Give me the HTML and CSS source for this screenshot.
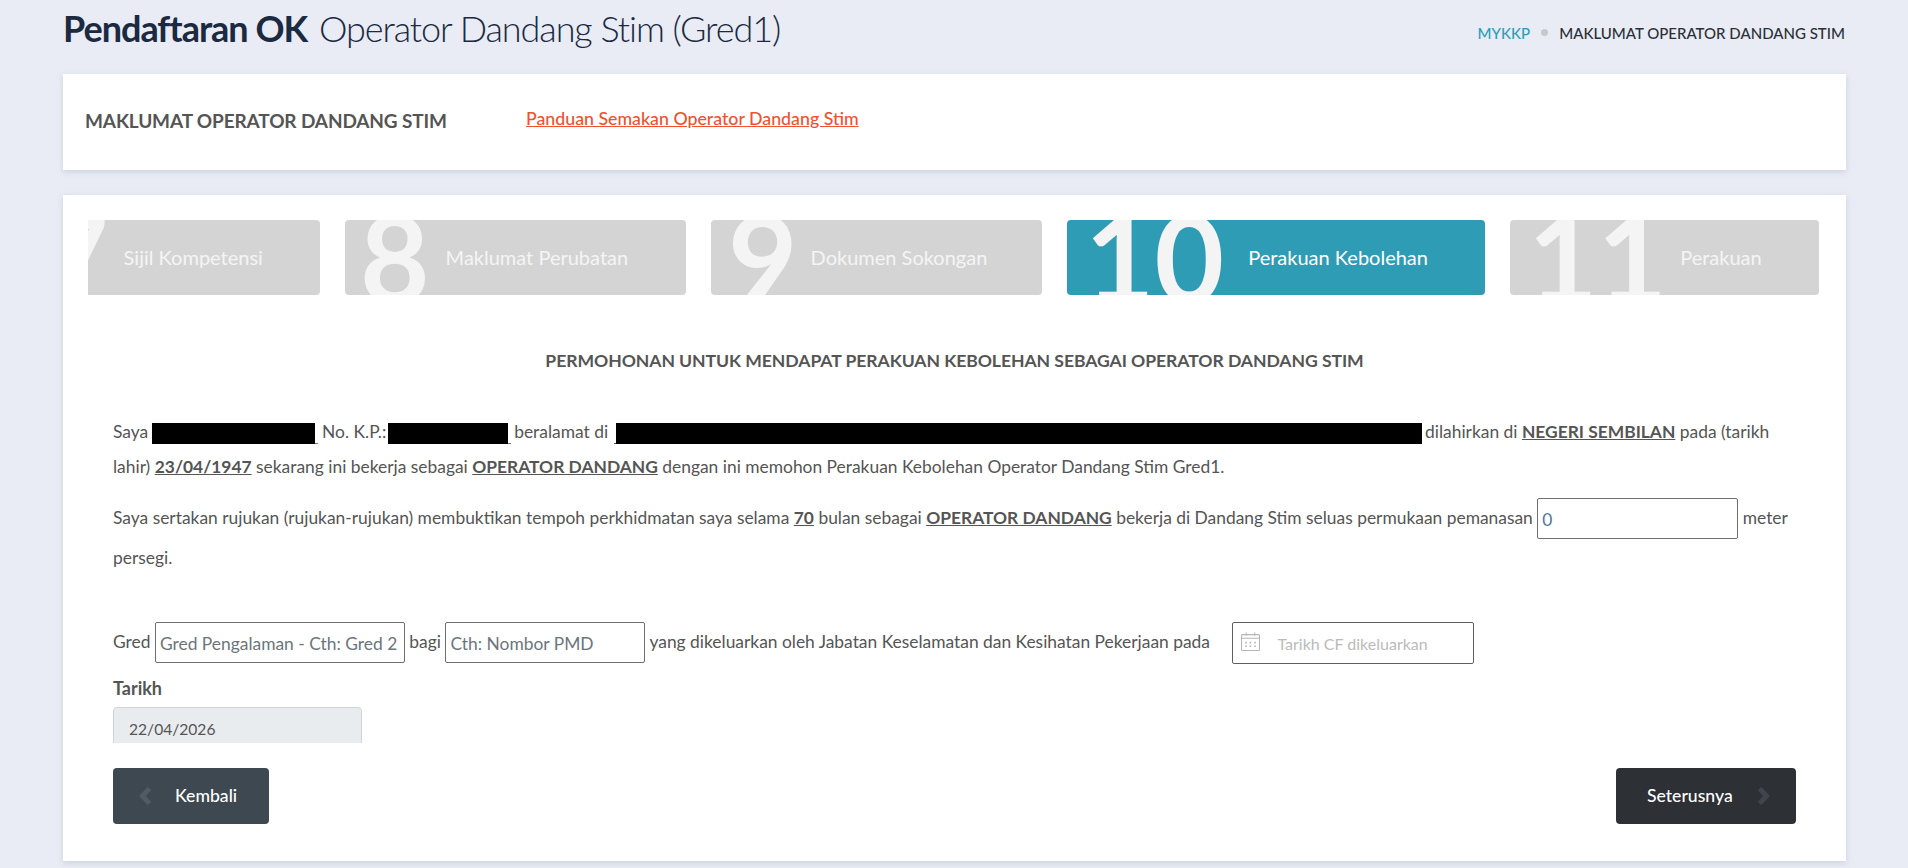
FILE: index.html
```html
<!DOCTYPE html>
<html lang="ms">
<head>
<meta charset="utf-8">
<title>Pendaftaran OK</title>
<link rel="stylesheet" href="styles.css">
</head>
<body>
<header class="page-head">
  <h1 class="page-title"><strong>Pendaftaran OK</strong> Operator Dandang Stim (Gred1)</h1>
  <nav class="crumbs"><a class="crumb-link">MYKKP</a><span class="crumb-dot"></span><span>MAKLUMAT OPERATOR DANDANG STIM</span></nav>
</header>
<section class="card card-info">
  <h2 class="info-title">MAKLUMAT OPERATOR DANDANG STIM</h2>
  <a class="info-link">Panduan Semakan Operator Dandang Stim</a>
</section>
<section class="card card-main">
  <div class="steps">
    <div class="step step-first"><span class="step-num">7</span><span class="step-label">Sijil Kompetensi</span></div>
    <div class="step step-second"><span class="step-num">8</span><span class="step-label">Maklumat Perubatan</span></div>
    <div class="step step-third"><span class="step-num">9</span><span class="step-label">Dokumen Sokongan</span></div>
    <div class="step step-active"><span class="step-num">10</span><span class="step-label">Perakuan Kebolehan</span></div>
    <div class="step step-last"><span class="step-num">11</span><span class="step-label">Perakuan</span></div>
  </div>
  <div class="form-pane">
    <h3 class="form-title">PERMOHONAN UNTUK MENDAPAT PERAKUAN KEBOLEHAN SEBAGAI OPERATOR DANDANG STIM</h3>
    <p class="para">Saya <span class="redact redact-name"></span> No. K.P.: <span class="redact redact-ic"></span> beralamat di <span class="redact redact-addr"></span> dilahirkan di <u class="val">NEGERI SEMBILAN</u> pada (tarikh lahir) <u class="val">23/04/1947</u> sekarang ini bekerja sebagai <u class="val">OPERATOR DANDANG</u> dengan ini memohon Perakuan Kebolehan Operator Dandang Stim Gred1.</p>
    <p class="para para-2">Saya sertakan rujukan (rujukan-rujukan) membuktikan tempoh perkhidmatan saya selama <u class="val">70</u> bulan sebagai <u class="val">OPERATOR DANDANG</u> bekerja di Dandang Stim seluas permukaan pemanasan <input class="field field-area" value="0"> meter persegi.</p>
    <p class="para para-3">Gred <input class="field field-gred" placeholder="Gred Pengalaman - Cth: Gred 2"> bagi <input class="field field-pmd" placeholder="Cth: Nombor PMD"> yang dikeluarkan oleh Jabatan Keselamatan dan Kesihatan Pekerjaan pada
      <span class="date-field">
        <svg class="cal-icon" viewBox="0 0 18 18" width="19" height="19" fill="none" stroke="#b5b5b5" stroke-width="1"><rect x=".5" y="2.5" width="17" height="15" rx="1"/><path d="M.5 6h17M5 .5v3M13 .5v3"/><path d="M4 10h1.5M8.2 10h1.5M12.5 10H14M4 13.5h1.5M8.2 13.5h1.5M12.5 13.5H14" stroke-width="1.6"/></svg>
        <span class="date-ph">Tarikh CF dikeluarkan</span>
      </span>
    </p>
    <label class="date-label">Tarikh</label>
    <div class="date-readonly">22/04/2026</div>
  </div>
  <div class="actions">
    <button class="btn btn-back"><svg class="chev" viewBox="0 0 12 18" width="12" height="18" fill="none" stroke="#515b63" stroke-width="5"><path d="M10.5 1.5 3.5 9l7 7.5"/></svg>Kembali</button>
    <button class="btn btn-next">Seterusnya<svg class="chev" viewBox="0 0 12 18" width="12" height="18" fill="none" stroke="#41444c" stroke-width="5"><path d="M1.5 1.5 8.5 9l-7 7.5"/></svg></button>
  </div>
</section>
</body>
</html>
```
FILE: styles.css
```css
* { box-sizing: border-box; }
html, body { height: 100%; }
body {
  margin: 0;
  padding: 0 62px 0 63px;
  background: #e9ecf5;
  font-family: Lato, "Liberation Sans", sans-serif;
  color: #555;
  overflow: hidden;
}
.page-head {
  display: flex;
  justify-content: space-between;
  align-items: center;
  height: 74px;
  padding-bottom: 16px;
}
.page-title {
  margin: 0;
  font-size: 36px;
  font-weight: 300;
  letter-spacing: -1.07px;
  color: #1b2a41;
  line-height: 1.2;
}
.page-title strong { font-weight: 700; letter-spacing: -1px; margin-right: 3px; }
.crumbs {
  display: flex;
  align-items: center;
  font-size: 15px;
  font-weight: 500;
  color: #2b2f36;
  padding: 7px 1px 0 0;
}
.crumb-link { color: #2f9cb5; }
.crumb-dot {
  width: 7px;
  height: 7px;
  border-radius: 50%;
  background: #c6c8cc;
  margin: 0 11px;
}
.card {
  background: #fff;
  box-shadow: 0 2px 6px rgba(120, 130, 160, .25);
}
.card-info {
  display: flex;
  align-items: center;
  height: 96px;
  padding: 0 22px 4px;
  margin-bottom: 25px;
}
.info-title {
  margin: 0;
  width: 441px;
  font-size: 19px;
  font-weight: 700;
  letter-spacing: -.13px;
  color: #555;
}
.info-link {
  font-size: 17.75px;
  font-weight: 500;
  color: #f0512f;
  text-decoration: underline;
  margin-top: -5px;
}
.card-main {
  height: 666px;
  padding: 25px;
}
.steps {
  display: flex;
  gap: 25px;
  height: 75px;
}
.step {
  display: flex;
  align-items: center;
  height: 75px;
  background: #d4d4d4;
  border-radius: 4px;
  overflow: hidden;
  padding-left: 15px;
  color: #f4f4f4;
  white-space: nowrap;
}
.step-first { flex: 0 0 232px; border-radius: 0 4px 4px 0; padding-left: 0; }
.step-first .step-num { margin-left: -49px; }
.step-second { flex: 0 0 341px; }
.step-second .step-num { margin-right: 16px; }
.step-third { flex: 0 0 331px; padding-left: 17px; }
.step-third .step-num { margin-right: 13px; }
.step-active { flex: 0 0 418px; background: #2f9cb5; color: #f4f4f4; padding-left: 18px; }
.step-active .step-num { margin-right: 24px; }
.step-active .step-label { color: #fff; }
.step-last { flex: 0 0 309px; padding-left: 18px; }
.step-last .step-num { margin-right: 13px; }
.step-num {
  font-size: 120px;
  font-weight: 700;
  line-height: 75px;
  margin-right: 15px;
  color: #f4f4f4;
}
.step-label { font-size: 20px; margin-top: -2px; }
.form-pane {
  height: 448px;
  overflow: hidden;
  padding: 0 25px;
}
.form-title {
  margin: 55px 0 42px;
  text-align: center;
  font-size: 17.6px;
  font-weight: 700;
  letter-spacing: -.07px;
  line-height: 22px;
  color: #555;
}
.para {
  margin: 0 0 15px;
  font-size: 17.4px;
  line-height: 35px;
}
.para-2 { margin-bottom: 46px; }
.para-3 { margin-bottom: 0; line-height: 42px; }
.val { font-weight: 700; }
.redact {
  display: inline-block;
  height: 21px;
  vertical-align: -6px;
}
.redact-name {
  width: 166px;
  margin-left: -1px;
  background:
    linear-gradient(#000, #000) left top / 163px 100% no-repeat,
    linear-gradient(#5d7da3, #5d7da3) right bottom / 3px 1px no-repeat;
}
.redact-ic {
  width: 123px;
  margin: 0 -1px 0 -3px;
  background:
    linear-gradient(#000, #000) left top / 120px 100% no-repeat,
    linear-gradient(#5d7da3, #5d7da3) right bottom / 3px 1px no-repeat;
}
.redact-addr {
  width: 808px;
  margin: 0 -1px 0 1px;
  background:
    linear-gradient(#000, #000) right top / 806px 100% no-repeat,
    linear-gradient(#555, #555) left bottom / 2px 1px no-repeat;
}
.field {
  height: 41px;
  margin: -1px 0 1px;
  border: 1px solid #6f6f6f;
  border-radius: 2px;
  padding: 2px 4px 0;
  font: 17.4px Lato, sans-serif;
  color: #52759f;
  background: #fff;
  outline: none;
  vertical-align: middle;
}
.field::placeholder { color: #6c757d; opacity: 1; }
.field-area { width: 201px; }
.field-gred { width: 250px; }
.field-pmd { width: 200px; }
.date-field {
  display: inline-flex;
  align-items: center;
  width: 242px;
  height: 42px;
  margin: -1px 0 1px 18px;
  border: 1px solid #5f5f5f;
  border-radius: 2px;
  padding-left: 8px;
  vertical-align: middle;
}
.cal-icon { margin-right: 17px; margin-top: -3px; }
.date-ph { font-size: 16px; color: #bbb; margin-top: 2px; }
.date-label {
  display: block;
  font-size: 18px;
  font-weight: 700;
  line-height: 22px;
  margin: 12px 0 8px;
}
.date-readonly {
  width: 249px;
  height: 44px;
  padding: 9px 15px;
  font-size: 15.6px;
  line-height: 24px;
  background: #e9ecef;
  border: 1px solid #ced4da;
  border-radius: 4px;
}
.actions {
  display: flex;
  justify-content: space-between;
  padding: 25px 25px 0;
}
.btn {
  display: flex;
  align-items: center;
  height: 56px;
  border: 0;
  border-radius: 4px;
  color: #fff;
  font: 500 17.6px Lato, sans-serif;
  padding-bottom: 2px;
}
.btn-back { width: 156px; background: #3e4850; padding-left: 26px; gap: 24px; }
.btn-next { width: 180px; background: #2d3035; padding-left: 31px; gap: 25px; }
```
